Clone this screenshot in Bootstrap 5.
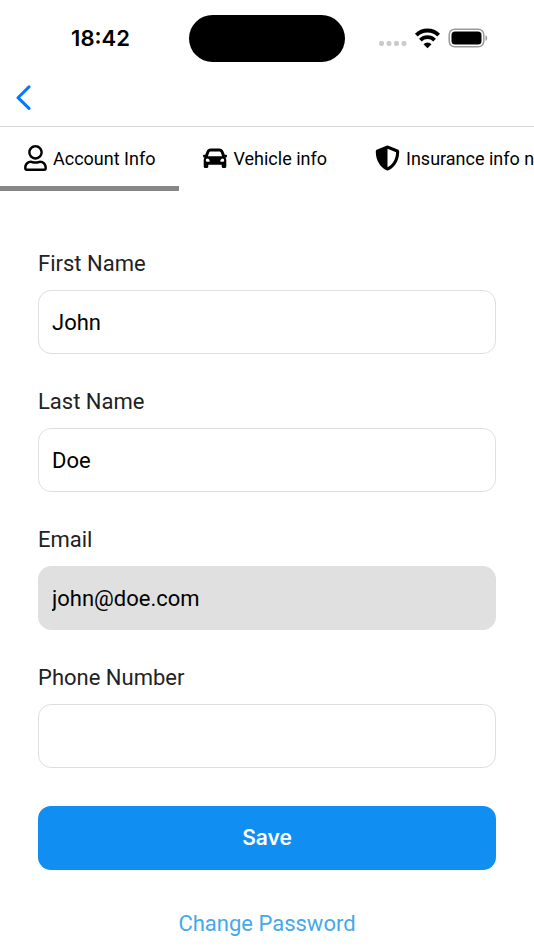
<!DOCTYPE html>
<html lang="en">
<head>
<meta charset="utf-8">
<meta name="viewport" content="width=device-width, initial-scale=1">
<title>Account Info</title>
<link href="https://cdn.jsdelivr.net/npm/bootstrap@5.3.0/dist/css/bootstrap.min.css" rel="stylesheet">
<style>
body { font-family: Roboto, Inter, sans-serif; color: #000; background: #fff; overflow-x: hidden; }
.status-bar { height: 76px; padding-right: 4px; }
.clock { font-family: Inter, sans-serif; font-size: 22px; font-weight: 600; padding-left: 12px; }
.island { width: 156px; height: 47px; background: #000; }
.top-nav { height: 51px; padding: 0 16px; border-bottom: 1px solid #d8d8d8; }
.top-nav svg { display: block; }
.tab-strip { overflow: hidden; }
.tab-strip .nav-link { height: 64px; padding: 3px 24px 0; gap: 6px; color: #000; font-size: 18px; border-bottom: 5px solid transparent; border-radius: 0; white-space: nowrap; }
.tab-strip .nav-link.active { border-bottom-color: #868686; }
.account-form { padding: 55px 38px 0; }
.field { margin-bottom: 30px; }
.field .form-label { display: block; font-size: 22px; line-height: 36px; margin-bottom: 8px; color: #222; }
.field .form-control { height: 64px; padding: 0 13px; font-size: 22px; color: #000; border: 1px solid #dfdfdf; border-radius: 13px; }
.field .form-control:disabled { background: #e0e0e0; opacity: 1; }
.save-btn { height: 64px; margin-top: 38px; font-size: 21px; font-weight: 600; font-family: Inter, sans-serif; border-radius: 13px; background: #108ef1; color: #fff; }
.change-link { font-size: 22px; line-height: 36px; margin-top: 36px; color: #45a9e8; }
</style>
</head>
<body>
<header>
  <div class="status-bar row g-0 align-items-center">
    <div class="col clock text-center">18:42</div>
    <div class="col-auto"><div class="island rounded-pill"></div></div>
    <div class="col d-flex align-items-center justify-content-center pe-2">
      <svg width="110" height="26" viewBox="0 0 110 26" aria-label="Wi-Fi connected, battery full" role="img">
        <g fill="#cbcbcb"><rect x="0" y="16" width="5" height="5" rx="2"/><rect x="7.500" y="16" width="5" height="5" rx="2"/><rect x="15" y="16" width="5" height="5" rx="2"/><rect x="22.500" y="16" width="5" height="5" rx="2"/></g>
        <g fill="none" stroke="#000" stroke-width="3.800"><path d="M37.300 10.200a15.700 15.700 0 0 1 22.400 0"/><path d="M41.400 15.100a10.200 10.200 0 0 1 14.200 0"/></g>
        <path d="M48.500 23.200l-4-4a5.600 5.600 0 0 1 8 0z"/>
        <rect x="70.200" y="4.200" width="34.600" height="17.600" rx="5.500" fill="none" stroke="#999" stroke-width="1.500"/>
        <rect x="72.500" y="6.500" width="30" height="13" rx="3.500"/>
        <path d="M106.500 10.200c2.300.8 2.300 4.800 0 5.600z" fill="#999"/>
      </svg>
    </div>
  </div>
  <nav class="top-nav d-flex align-items-center" aria-label="Back">
    <a href="#" class="d-block pb-2" aria-label="Go back">
      <svg width="16" height="26" viewBox="0 0 16 26"><path d="M13 2.900L2 13.700l11 10.700" fill="none" stroke="#007aff" stroke-width="3" stroke-linecap="round" stroke-linejoin="round"/></svg>
    </a>
  </nav>
</header>
<nav class="nav tab-strip flex-nowrap" aria-label="Sections">
  <a class="nav-link active d-flex align-items-center flex-shrink-0" href="#" aria-current="page">
    <svg width="23" height="26" viewBox="0 0 448 512"><path d="M313.600 304c-28.700 0-42.500 16-89.600 16-47.100 0-60.800-16-89.600-16C60.200 304 0 364.200 0 438.400V464c0 26.500 21.500 48 48 48h352c26.500 0 48-21.500 48-48v-25.600c0-74.200-60.200-134.400-134.400-134.400zM400 464H48v-25.600c0-47.600 38.800-86.400 86.400-86.400 14.600 0 38.300 16 89.600 16 51.700 0 74.900-16 89.600-16 47.600 0 86.400 38.800 86.400 86.400V464zM224 288c79.500 0 144-64.500 144-144S303.500 0 224 0 80 64.500 80 144s64.500 144 144 144zm0-240c52.900 0 96 43.100 96 96s-43.100 96-96 96-96-43.100-96-96 43.100-96 96-96z"/></svg>
    Account Info</a>
  <a class="nav-link d-flex align-items-center flex-shrink-0" href="#">
    <svg width="24" height="26" viewBox="0 0 24 26"><path fill-rule="evenodd" d="M7.800 3.500h8.400c2 0 3.600 1 4.300 2.900L21.800 9.800h1.400c.6 0 .9.500.8 1l-.3 1.200c-.1.400-.4.600-.8.600h-.4c.5.700.8 1.500.8 2.400v6.500c0 .9-.6 1.500-1.500 1.500h-1.600c-.9 0-1.500-.6-1.500-1.500v-1.700H5.300v1.700c0 .9-.6 1.500-1.500 1.500H2.200c-.9 0-1.500-.6-1.500-1.500V15c0-.9.300-1.700.8-2.400h-.4c-.4 0-.7-.2-.8-.6L0 10.800c-.1-.5.200-1 .8-1h1.400l1.300-3.400c.7-1.900 2.300-2.900 4.300-2.900zm.2 3c-.9 0-1.600.5-1.900 1.300L4.900 11.200h14.200l-1.200-3.400c-.3-.8-1-1.300-1.900-1.300zM4.400 13.600a1.600 1.600 0 1 0 0 3.200c1 0 2.300.1 2.300-.8s-1.200-2.400-2.300-2.400zm15.200 0c-1.100 0-2.300 1.500-2.300 2.400s1.300.8 2.300.8a1.600 1.600 0 1 0 0-3.200z"/></svg>
    Vehicle info</a>
  <a class="nav-link d-flex align-items-center flex-shrink-0" href="#">
    <svg width="25" height="26" viewBox="0 0 512 512"><path d="M466.500 83.700l-192-80a48.150 48.150 0 0 0-36.900 0l-192 80C27.700 91.100 16 108.600 16 128c0 198.500 114.500 335.700 221.500 380.300 11.800 4.900 25.100 4.900 36.900 0C360.100 472.600 496 349.300 496 128c0-19.400-11.700-36.900-29.500-44.300zM256.100 446.300l-.1-381 175.900 73.300c-3.300 151.400-82.100 261.100-175.800 307.700z"/></svg>
    Insurance info n</a>
</nav>
<main>
  <form class="account-form">
    <div class="field"><label class="form-label" for="first">First Name</label><input class="form-control" id="first" type="text" value="John"></div>
    <div class="field"><label class="form-label" for="last">Last Name</label><input class="form-control" id="last" type="text" value="Doe"></div>
    <div class="field"><label class="form-label" for="email">Email</label><input class="form-control" id="email" type="email" value="john@doe.com" disabled></div>
    <div class="field mb-0"><label class="form-label" for="phone">Phone Number</label><input class="form-control" id="phone" type="tel"></div>
    <button class="btn save-btn w-100 border-0" type="submit">Save</button>
    <div class="text-center"><a class="change-link d-inline-block text-decoration-none" href="#">Change Password</a></div>
  </form>
</main>
<script src="https://cdn.jsdelivr.net/npm/bootstrap@5.3.0/dist/js/bootstrap.bundle.min.js"></script>
</body>
</html>
